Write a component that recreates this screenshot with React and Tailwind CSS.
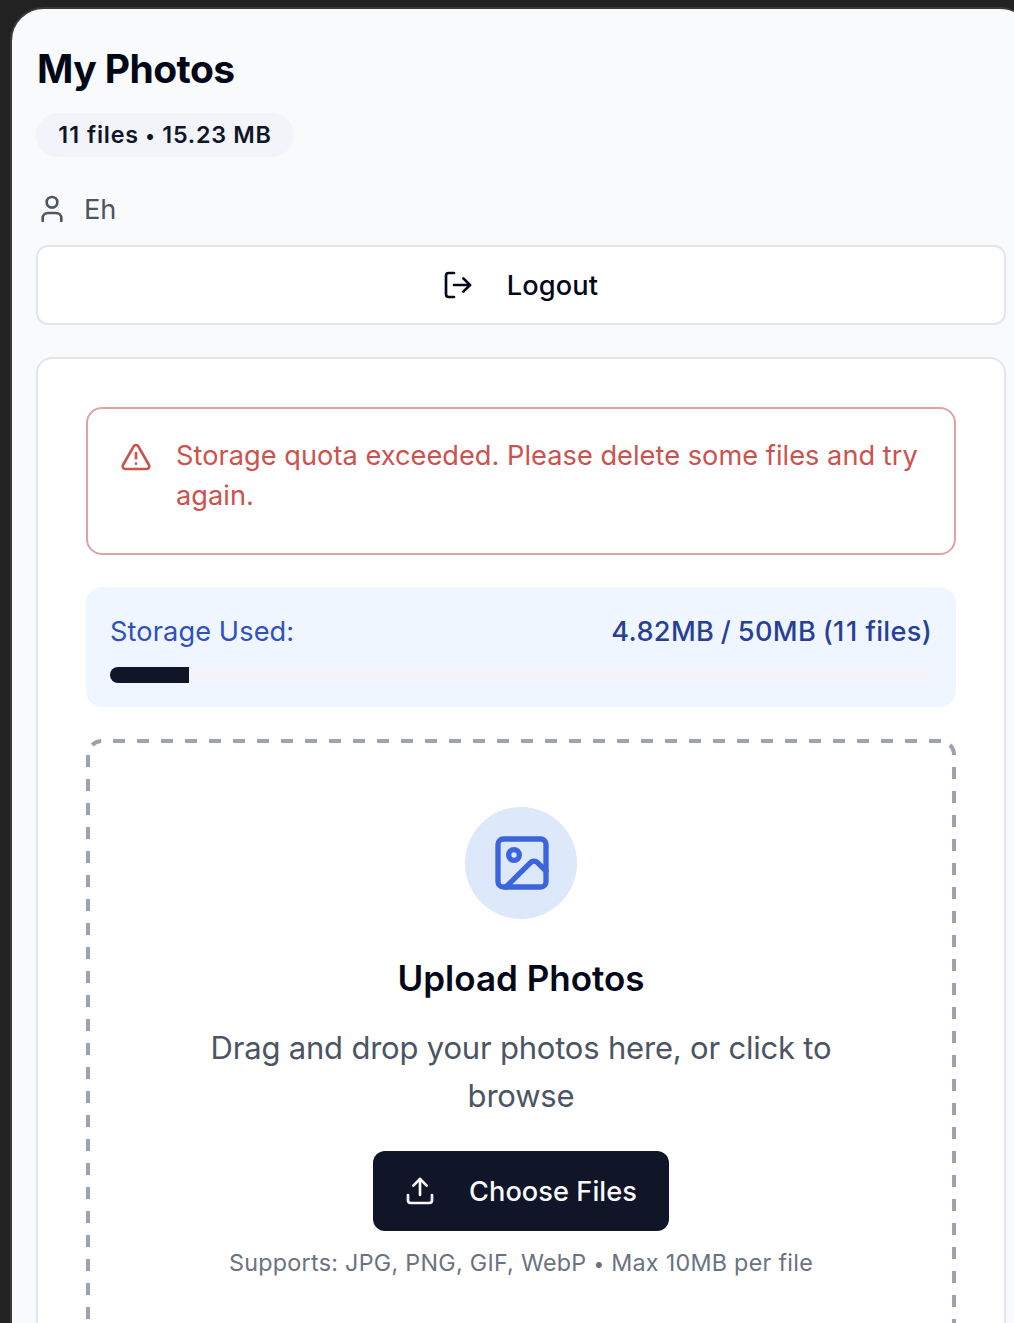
import { User, LogOut, TriangleAlert, Image as ImageIcon, Upload } from "lucide-react";

function DashedEdges() {
  return (
    <div className="pointer-events-none absolute inset-0 text-[#9ca3af]">
      <div className="absolute left-[27px] right-[15px] top-0 h-1 bg-[repeating-linear-gradient(90deg,#9ca3af_0_12px,transparent_12px_24px)]" />
      <div className="absolute bottom-0 left-0 top-4 w-1 bg-[repeating-linear-gradient(180deg,#9ca3af_0_12px,transparent_12px_24px)]" />
      <div className="absolute bottom-0 right-0 top-7 w-1 bg-[repeating-linear-gradient(180deg,#9ca3af_0_12px,transparent_12px_24px)]" />
      <svg className="absolute left-0 top-0" width="16" height="16" fill="none" stroke="currentColor" strokeWidth="4">
        <path d="M6.2 6 A14 14 0 0 1 15.2 2" />
      </svg>
      <svg className="absolute right-0 top-0" width="16" height="16" fill="none" stroke="currentColor" strokeWidth="4">
        <path d="M10 6 A14 14 0 0 1 14 16" />
      </svg>
    </div>
  );
}

export default function App() {
  return (
    <div className="h-[1323px] w-[1014px] overflow-hidden bg-[#222223] pl-[10px] pt-[7px] font-['Inter',sans-serif] text-[#020817]">
      <main className="h-[1360px] w-[1024px] rounded-t-[34px] border-2 border-[#3a3a3c] bg-[#f9fafc] pl-6 pt-9">
        <div className="w-[970px]">
          <h1 className="pl-px text-[39px] font-bold leading-12 tracking-[-0.55px]">My Photos</h1>
          <div className="mt-5 flex h-11 w-[258px] items-center justify-center rounded-full bg-[#f2f4f9] text-[23.3px] font-semibold tracking-[0.75px] text-[#111528]">
            <span><span className="tracking-[1.2px]">11</span> files <span className="text-[19px]">•</span> 15.23 MB</span>
          </div>
          <div className="mt-8 flex h-10 items-center gap-4 text-[27.2px] text-[#4b5563]">
            <User size={32} />
            <span className="pt-0.5">Eh</span>
          </div>
          <button className="mt-4 flex h-20 w-full items-center justify-center gap-[33px] rounded-xl border-2 border-[#e2e5ec] bg-white pr-[2px] text-[27.2px] font-medium tracking-[0.1px]">
            <LogOut size={32} />
            <span className="pt-0.5">Logout</span>
          </button>
          <section className="mt-8 h-[1100px] rounded-2xl border-2 border-[#e2e5ec] bg-white p-12">
            <div className="flex h-[148px] gap-6 rounded-2xl border-2 border-[#e0a3a3] px-8 pt-[27px] text-[27.2px] leading-10 tracking-[0.03px] text-[#cb524d]">
              <TriangleAlert size={32} className="mt-[5px] shrink-0" />
              <p className="whitespace-nowrap">Storage quota exceeded. Please delete some files and try<br />again.</p>
            </div>
            <div className="mt-8 h-[120px] rounded-2xl bg-[#eff6ff] px-6 pt-[25px] text-[27.2px] leading-10">
              <div className="flex justify-between text-[#2f50bd]">
                <span className="tracking-[0.1px]">Storage Used:</span>
                <span className="font-medium tracking-[0.3px] text-[#283f97] [word-spacing:-0.9px]">4.82MB / 50MB (<span className="tracking-[1.6px]">11</span> files)</span>
              </div>
              <div className="mt-[15px] h-4 overflow-hidden rounded-full bg-[#f2f4f9]"><div className="h-4 w-[79px] bg-[#111528]" /></div>
            </div>
            <div className="relative mt-8 flex h-[1000px] flex-col items-center rounded-2xl pt-17 text-center">
              <DashedEdges />
              <div className="flex size-28 items-center justify-center rounded-full bg-[#dde8fb]"><ImageIcon size={64} className="ml-0.5 text-[#3b65dc]" /></div>
              <h2 className="mt-[31px] text-[35px] font-semibold leading-14">Upload Photos</h2>
              <p className="mt-[18px] text-[31px] leading-12 tracking-[-0.2px] text-[#4b5563]">Drag and drop your photos here, or click to<br />browse</p>
              <button className="mt-[31px] flex h-20 w-[296px] items-center gap-[33px] rounded-xl bg-[#111528] pl-[31px] text-[27.2px] font-medium tracking-[0.05px] text-[#f8fafc]"><Upload size={32} /><span className="pt-0.5">Choose Files</span></button>
              <p className="mt-4 text-[23.3px] leading-8 tracking-[0.28px] text-[#6b7280]">Supports: JPG, PNG, GIF, WebP <span className="text-[19px]">•</span> Max 10MB per file</p>
            </div>
          </section>
        </div>
      </main>
    </div>
  );
}
